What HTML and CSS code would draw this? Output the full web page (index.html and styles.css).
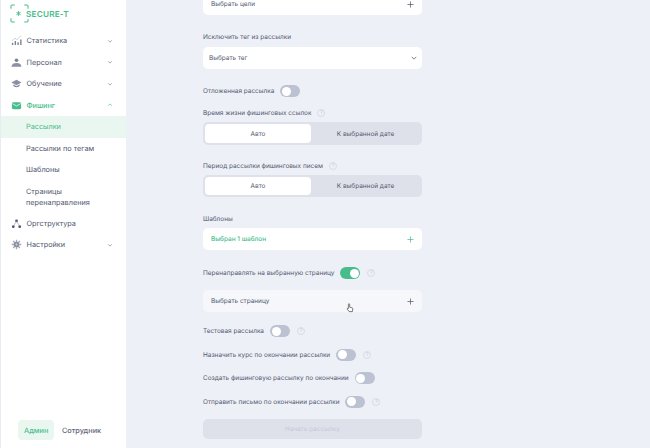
FILE: index.html
```html
<!DOCTYPE html>
<html lang="ru">
<head>
<meta charset="utf-8">
<title>Secure-T</title>
<link rel="stylesheet" href="styles.css">
</head>
<body>
<div class="app">
  <aside class="sidebar">
    <div class="logo">
      <svg class="logo-mark" viewBox="0 0 20 20" width="19" height="19" fill="none" stroke="#47bd8b" stroke-width="1.1">
        <path d="M1 5V2.500A1.500 1.500 0 0 1 2.500 1H5M15 1h2.500A1.500 1.500 0 0 1 19 2.500V5M1 15v2.500A1.500 1.500 0 0 0 2.500 19H5M15 19h2.500a1.500 1.500 0 0 0 1.500-1.500V15"/>
        <path d="M9 7.500v5M6.800 8.700l4.400 2.600M11.200 8.700l-4.400 2.600" stroke-width="1"/>
      </svg>
      <span class="logo-text">SECURE-T</span>
    </div>
    <nav class="nav">
      <div class="nav-item">
        <svg class="ico" viewBox="0 0 12 12"><path d="M1 11h1.500V8.500H1zM4 11h1.500V6.500H4zM7 11h1.500V8H7zM10 11h1.500V5H10z" fill="#7b8296"/><path d="M1 6.500l3-3 2.500 1.500L11 1" fill="none" stroke="#9aa0b0" stroke-width=".8" stroke-dasharray="1 .6"/></svg>
        <span class="nav-label">Статистика</span>
        <svg class="chev" viewBox="0 0 8 8"><path d="M1.500 3l2.500 2.500L6.500 3" /></svg>
      </div>
      <div class="nav-item">
        <svg class="ico" viewBox="0 0 12 12"><circle cx="6" cy="3.500" r="2" fill="#7b8296"/><path d="M.5 10.500c.5-3 2.500-4 5.500-4s5 1 5.500 4z" fill="#8b91a3"/></svg>
        <span class="nav-label">Персонал</span>
        <svg class="chev" viewBox="0 0 8 8"><path d="M1.500 3l2.500 2.500L6.500 3" /></svg>
      </div>
      <div class="nav-item">
        <svg class="ico" viewBox="0 0 12 12"><path d="M6 2L.5 5 6 8l5.500-3z" fill="#8b91a3"/><path d="M2.500 7v1.500C3.500 10.500 8.500 10.500 9.500 8.500V7L6 9z" fill="#7b8296"/></svg>
        <span class="nav-label">Обучение</span>
        <svg class="chev" viewBox="0 0 8 8"><path d="M1.500 3l2.500 2.500L6.500 3" /></svg>
      </div>
      <div class="nav-item active">
        <svg class="ico" viewBox="0 0 12 12"><rect x="1" y="2.500" width="10" height="7.500" rx="1.500" fill="#47bd8b"/><path d="M1.500 4L6 6.500 10.500 4" fill="none" stroke="#fff" stroke-width=".8"/></svg>
        <span class="nav-label">Фишинг</span>
        <svg class="chev" viewBox="0 0 8 8"><path d="M1.500 5L4 2.500 6.500 5" /></svg>
      </div>
      <div class="sub sub-active">Рассылки</div>
      <div class="sub">Рассылки по тегам</div>
      <div class="sub">Шаблоны</div>
      <div class="sub sub-two">Страницы перенаправления</div>
      <div class="nav-item">
        <svg class="ico" viewBox="0 0 12 12"><circle cx="6" cy="3" r="1.500" fill="#4d5468"/><circle cx="2.500" cy="9.500" r="1.500" fill="#4d5468"/><circle cx="9.500" cy="9.500" r="1.500" fill="#4d5468"/><path d="M5.500 4L3 8.500M6.500 4L9 8.500" stroke="#9aa0b0" stroke-width=".7"/></svg>
        <span class="nav-label">Оргструктура</span>
      </div>
      <div class="nav-item">
        <svg class="ico" viewBox="0 0 12 12"><path d="M6 .8v10.400M.8 6h10.400M2.300 2.300l7.400 7.400M9.700 2.300L2.300 9.700" stroke="#a4a9b8" stroke-width="1.500"/><circle cx="6" cy="6" r="3" fill="#8b91a3"/><circle cx="6" cy="6" r="1" fill="#d5d8e0"/></svg>
        <span class="nav-label">Настройки</span>
        <svg class="chev" viewBox="0 0 8 8"><path d="M1.500 3l2.500 2.500L6.500 3" /></svg>
      </div>
    </nav>
    <div class="roles">
      <span class="role role-on">Админ</span>
      <span class="role">Сотрудник</span>
    </div>
  </aside>
  <main class="main">
    <div class="form">
      <div class="card first-card"><span>Выбрать цели</span><svg class="plus" viewBox="0 0 8 8"><path d="M4 .5v7M.5 4h7"/></svg></div>

      <div class="label gap-l">Исключить тег из рассылки</div>
      <div class="card select"><span>Выбрать тег</span>
        <svg class="sel-chev" viewBox="0 0 8 8"><path d="M1 2.500l3 3 3-3"/></svg>
      </div>

      <div class="row row-delayed"><span>Отложенная рассылка</span><span class="toggle"></span></div>

      <div class="label gap-s">Время жизни фишинговых ссылок <span class="hint">?</span></div>
      <div class="segment"><span class="seg seg-on">Авто</span><span class="seg">К выбранной дате</span></div>

      <div class="label gap-p">Период рассылки фишинговых писем <span class="hint">?</span></div>
      <div class="segment segment-low"><span class="seg seg-on">Авто</span><span class="seg">К выбранной дате</span></div>

      <div class="label gap-t">Шаблоны</div>
      <div class="card picked"><span>Выбран 1 шаблон</span><svg class="plus" viewBox="0 0 8 8"><path d="M4 .5v7M.5 4h7"/></svg></div>

      <div class="row row-redirect"><span>Перенаправлять на выбранную страницу</span><span class="toggle toggle-on"></span><span class="hint">?</span></div>

      <div class="card hovered"><span>Выбрать страницу</span><svg class="plus" viewBox="0 0 8 8"><path d="M4 .5v7M.5 4h7"/></svg>
        <svg class="cursor" viewBox="0 0 10 12" width="8" height="10"><path d="M3 6V1.500a.8.8 0 0 1 1.600 0V5l3 .8c.8.200 1 .8.900 1.500L8 10.500H4L1.500 7.500c-.5-.8.500-1.500 1.500-.8z" fill="#fff" stroke="#333" stroke-width=".8"/></svg>
      </div>

      <div class="row row-test"><span>Тестовая рассылка</span><span class="toggle"></span><span class="hint">?</span></div>
      <div class="row row-next"><span>Назначить курс по окончании рассылки</span><span class="toggle"></span><span class="hint">?</span></div>
      <div class="row row-next"><span>Создать фишинговую рассылку по окончании</span><span class="toggle"></span></div>
      <div class="row row-next"><span>Отправить письмо по окончании рассылки</span><span class="toggle"></span><span class="hint">?</span></div>

      <div class="start">Начать рассылку</div>
    </div>
  </main>
</div>
</body>
</html>
```
FILE: styles.css
```css
* { box-sizing: border-box; }
html, body { margin: 0; height: 100%; overflow: hidden; }
body {
  font-family: "Inter", "Liberation Sans", sans-serif;
  font-size: 6.450px;
  color: #525970;
  background: #edf0f7;
  text-rendering: geometricPrecision;
}
.app { display: flex; width: 650px; height: 448px; }
.sidebar {
  width: 126px;
  flex: none;
  background: #fff;
  border-left: 1px solid #e8ebf2;
  display: flex;
  flex-direction: column;
}
.logo { display: flex; align-items: center; height: 27px; padding-left: 9px; }
.logo-mark { flex: none; }
.logo-text { margin-left: -4px; font-size: 8.200px; font-weight: 600; letter-spacing: .2px; color: #47bd8b; background: #fff; padding-left: 1px; }
.nav { margin-top: 3px; display: flex; flex-direction: column; }
.nav-item { display: flex; align-items: center; height: 21.500px; padding: 0 13px 0 10px; font-size: 7.300px; }
.ico { width: 11px; height: 11px; flex: none; }
.nav-label { margin-left: 4.500px; flex: 1; }
.chev { width: 6px; height: 6px; flex: none; fill: none; stroke: #7b8296; stroke-width: .9; }
.active { color: #47bd8b; font-weight: 500; }
.active .chev { stroke: #47bd8b; }
.sub { height: 21.500px; display: flex; align-items: center; padding-left: 25px; font-size: 7.300px; }
.sub-active { background: #eaf7f1; color: #47bd8b; }
.sub-two { height: 32px; line-height: 11px; padding-right: 20px; }
.roles { margin-top: auto; margin-bottom: 8px; margin-left: 17px; display: flex; align-items: center; gap: 8px; font-size: 7.300px; font-weight: 500; }
.role { height: 20px; display: flex; align-items: center; color: #5d6479; }
.role-on { background: #eaf7f1; color: #47bd8b; border-radius: 4px; padding: 0 6px; width: 36px; }

.main { flex: 1; }
.form { width: 219px; margin-left: 77px; margin-top: -7px; display: flex; flex-direction: column; }
.label { display: flex; align-items: center; gap: 6px; height: 10px; }
.gap-l { margin-top: 17px; }
.gap-s { margin-top: 11px; }
.gap-p { margin-top: 16px; }
.gap-t { margin-top: 17px; }
.card {
  height: 22px;
  flex: none;
  background: #fff;
  border-radius: 5px;
  display: flex;
  align-items: center;
  justify-content: space-between;
  padding: 0 8px;
  position: relative;
  margin-top: 5px;
}
.first-card { margin-top: 0; }
.select { padding: 0 5px 0 6px; }
.plus { width: 7px; height: 7px; fill: none; stroke: #4d5468; stroke-width: .8; flex: none; }
.sel-chev { width: 6px; height: 6px; fill: none; stroke: #4d5468; stroke-width: 1; }
.picked { color: #47bd8b; font-weight: 500; margin-top: 4px; }
.picked .plus { stroke: #47bd8b; }
.hovered { background: #f5f7fb; margin-top: 11px; }
.cursor { position: absolute; left: 143px; top: 13px; }
.row { display: flex; align-items: center; gap: 6px; height: 12px; }
.row-delayed { margin-top: 16px; }
.row-redirect { margin-top: 17px; }
.row-test { margin-top: 13px; }
.row-next { margin-top: 11.500px; }
.toggle { width: 20px; height: 12px; border-radius: 6px; background: #bcc2d2; position: relative; flex: none; }
.toggle::after { content: ""; position: absolute; left: 1.500px; top: 1.500px; width: 9px; height: 9px; border-radius: 50%; background: #fff; }
.toggle-on { background: #47bd8b; }
.toggle-on::after { left: 9.500px; }
.hint { width: 8px; height: 8px; border: 1px solid #d9dce6; border-radius: 50%; color: #c8ccd8; font-size: 5px; display: inline-flex; align-items: center; justify-content: center; flex: none; }
.row .hint { margin-left: 1px; }
.segment { height: 23px; flex: none; margin-top: 4px; background: #dfe1ea; border-radius: 5px; padding: 2px; display: flex; }
.segment-low { height: 22px; }
.seg { flex: 1; display: flex; align-items: center; justify-content: center; border-radius: 4px; }
.seg-on { background: #fff; flex: 0 0 106px; }
.start { height: 19.500px; flex: none; margin-top: 11.500px; background: #dfe1ea; border-radius: 5px; color: #c5c9d6; display: flex; align-items: center; justify-content: center; }
```
